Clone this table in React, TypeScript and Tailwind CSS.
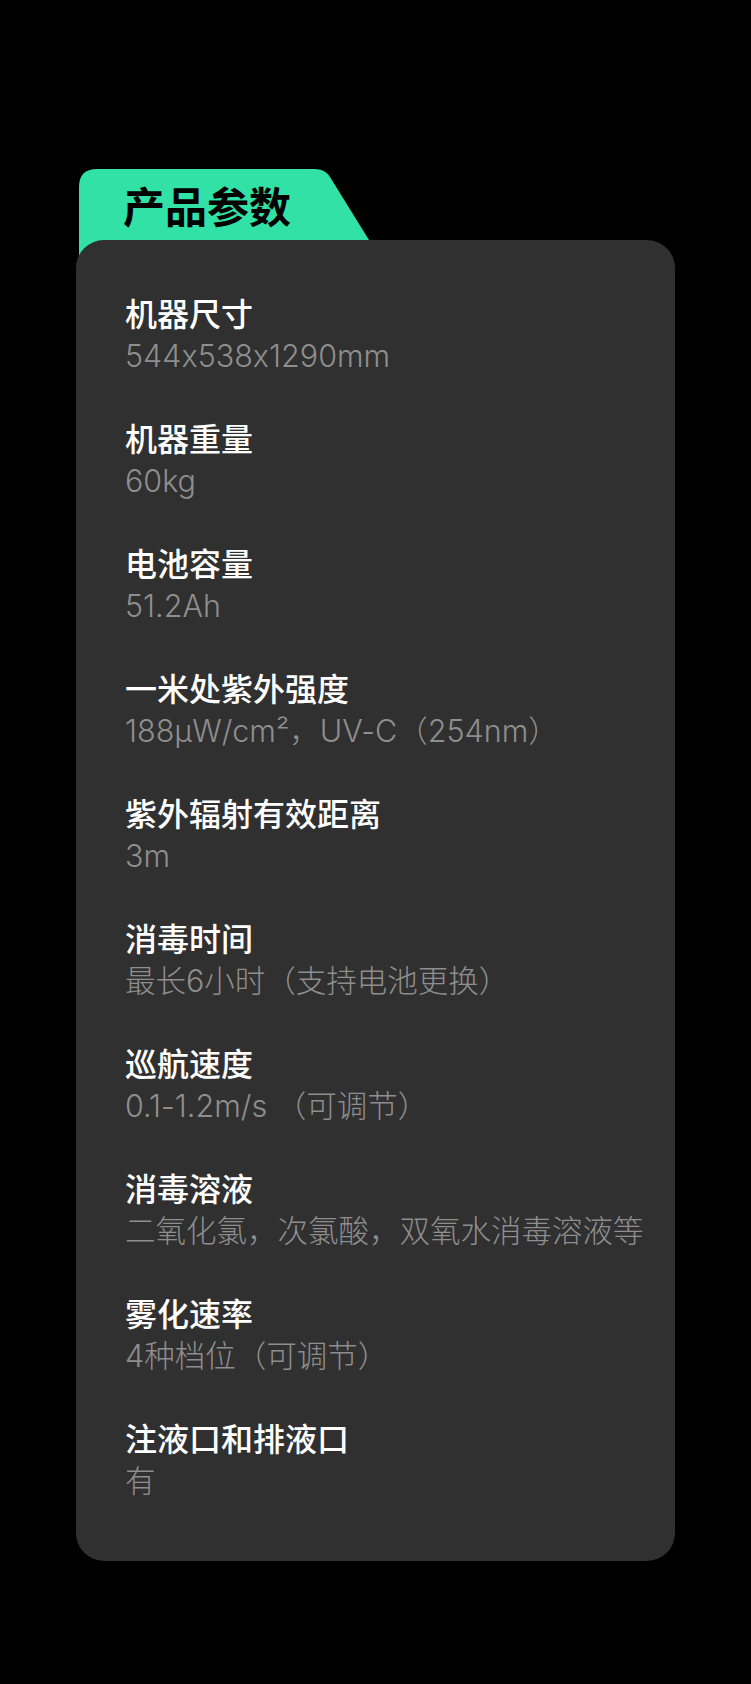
const SPECS = [
  { label: '机器尺寸', value: '544x538x1290mm' },
  { label: '机器重量', value: '60kg' },
  { label: '电池容量', value: '51.2Ah' },
  { label: '一米处紫外强度', value: '188μW/cm²，UV-C（254nm）' },
  { label: '紫外辐射有效距离', value: '3m' },
  { label: '消毒时间', value: '最长6小时（支持电池更换）' },
  { label: '巡航速度', value: '0.1-1.2m/s （可调节）' },
  { label: '消毒溶液', value: '二氧化氯，次氯酸，双氧水消毒溶液等' },
  { label: '雾化速率', value: '4种档位（可调节）' },
  { label: '注液口和排液口', value: '有' },
]

export default function App() {
  return (
    <div className="min-h-[1684px] w-full bg-black pt-[169px] px-[76px] font-['Noto_Sans_CJK_SC','Noto_Sans',sans-serif]">
      {/* tab */}
      <div className="relative ml-[3px] h-[95px] w-[290px]">
        <svg className="absolute inset-0" width="290" height="95" viewBox="0 0 290 95">
          <path d="M0 18 Q0 0 18 0 L236 0 Q246 0 251 8 L290 71 L290 95 L0 95 Z" fill="#31e1a6" />
        </svg>
        <div className="relative flex h-[71px] items-center pl-[44px] text-[42px] font-bold leading-none text-black">
          产品参数
        </div>
      </div>

      {/* card */}
      <div className="relative -mt-[24px] flex flex-col gap-[37px] rounded-[28px] bg-[#303030] pb-[58px] pl-[49px] pr-6 pt-[50px]">
        {SPECS.map((s) => (
          <div key={s.label} className="flex flex-col">
            <div className="text-[32px] font-medium leading-[44px] text-white">{s.label}</div>
            <div className="font-['Inter','Noto_Sans_CJK_SC',sans-serif] [font-feature-settings:'calt'_0] text-[30.5px] font-light leading-[44px] text-[#8e8e8e]">
              {s.value}
            </div>
          </div>
        ))}
      </div>
    </div>
  )
}
